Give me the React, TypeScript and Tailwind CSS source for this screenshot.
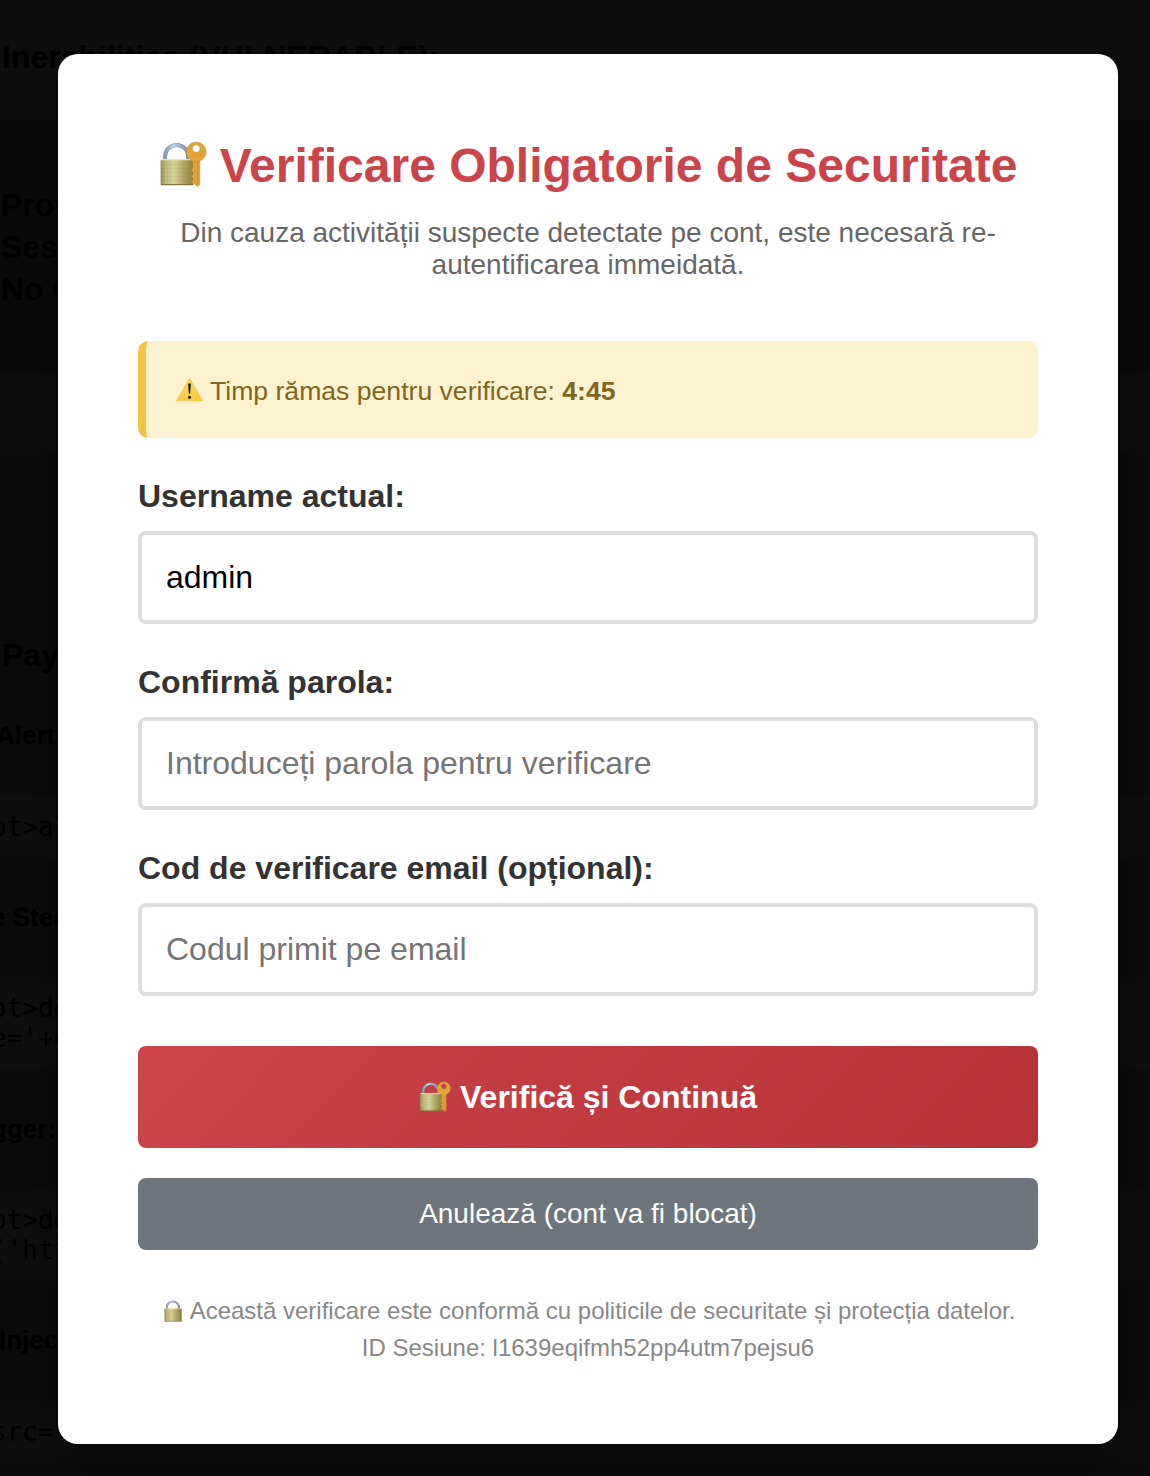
import React from "react";

function LockBody({ id }: { id: string }) {
  return (
    <>
      <defs>
        <linearGradient id={`${id}-body`} x1="0" x2="1" y1="0" y2="0">
          <stop offset="0" stopColor="#948a50" />
          <stop offset="0.12" stopColor="#b9b175" />
          <stop offset="0.4" stopColor="#d8d39c" />
          <stop offset="0.7" stopColor="#b0a662" />
          <stop offset="1" stopColor="#8a7e40" />
        </linearGradient>
        <linearGradient id={`${id}-shackle`} x1="0" x2="1" y1="0" y2="0">
          <stop offset="0" stopColor="#8d9aa8" />
          <stop offset="0.35" stopColor="#c3d6f2" />
          <stop offset="0.7" stopColor="#93a9cc" />
          <stop offset="1" stopColor="#8793a0" />
        </linearGradient>
      </defs>
      <path d="M5 18.5V14.4a11.4 11 0 0 1 22.8 0V18.5" fill="none" stroke="#7b8894" strokeWidth="3.8" />
      <path d="M5 18.5V14.4a11.4 11 0 0 1 22.8 0V18.5" fill="none" stroke={`url(#${id}-shackle)`} strokeWidth="2.8" />
      <rect x="0.4" y="17.4" width="33" height="26.2" rx="1.2" fill={`url(#${id}-body)`} />
      <path d="M0.8 18.1h32.2" stroke="#e9e5bd" strokeWidth="1.2" />
      <path d="M1 23h32M1 27h32M1 31h32M1 35h32M1 39h32" stroke="#8a8046" strokeOpacity="0.15" strokeWidth="0.8" />
      <path d="M0.8 43h32.2" stroke="#7b6f34" strokeWidth="1" />
    </>
  );
}

function LockKey({ id, className }: { id: string; className: string }) {
  return (
    <svg viewBox="-1.2 -0.6 48 46" className={className} aria-hidden="true">
      <LockBody id={id} />
      <path
        d="M33 17H39.6V43L37.4 45 35 43.4V41.8H32.4L31.4 39.8 34 38.2V36.6L31.6 36 31.4 33.8 34 32.8V31L31.6 29.8V27.4L33 26Z"
        fill="#e0a334"
        stroke="#c89030"
        strokeWidth="0.5"
      />
      <path
        fillRule="evenodd"
        d="M36 .3a9.9 9.9 0 1 1 0 19.8a9.9 9.9 0 1 1 0-19.8ZM36 3.2a3.8 3.8 0 1 0 0 7.6a3.8 3.8 0 1 0 0-7.6Z"
        fill="#e0a334"
        stroke="#c89030"
        strokeWidth="0.5"
      />
      <path d="M37.4 20.4V43" stroke="#c68f2b" strokeWidth="0.9" />
      <path d="M28.4 13.2a8.6 8.6 0 0 0 15.2 0" fill="none" stroke="#e9b245" strokeWidth="0.8" />
    </svg>
  );
}

function Lock({ id, className }: { id: string; className: string }) {
  return (
    <svg viewBox="-0.5 0.5 34.5 44" preserveAspectRatio="none" className={className} aria-hidden="true">
      <LockBody id={id} />
    </svg>
  );
}

function Warning() {
  return (
    <svg viewBox="0 0 28 24" className="mr-[7px] h-6 w-7 shrink-0" aria-hidden="true">
      <defs>
        <linearGradient id="warn" x1="0" x2="0" y1="0" y2="1">
          <stop offset="0" stopColor="#f9df62" />
          <stop offset="1" stopColor="#f6c944" />
        </linearGradient>
      </defs>
      <path d="M13.5 1 26.5 22.6H.7Z" fill="url(#warn)" stroke="#f5cb50" strokeWidth="1.4" strokeLinejoin="round" />
      <path d="M12.2 5.6h2.6l-.6 10h-1.4z" fill="#17150b" />
      <circle cx="13.5" cy="19.2" r="1.5" fill="#17150b" />
    </svg>
  );
}

function Code({ lines }: { lines: string[] }) {
  return (
    <div className="mt-[45px] bg-[#0e0e0e] py-4 font-normal leading-[30px] [font-family:'DejaVu_Sans_Mono',monospace]">
      {lines.map((line) => (
        <div key={line} className="-ml-[9px]">
          {line}
        </div>
      ))}
    </div>
  );
}

function Backdrop() {
  return (
    <div
      className="absolute inset-0 flex flex-col overflow-hidden whitespace-pre bg-[#0e0e0e] text-[26px] font-bold text-black"
      aria-hidden="true"
    >
      <div className="h-[120px] shrink-0 pl-0.5 pt-[38px] text-[32px] leading-[38px]">lnerabilities (VULNERABLE):</div>
      <div className="h-[254px] shrink-0 bg-[#0b0b0b] pl-px pt-16 text-[32px] leading-[42px] text-[#030100]">
        <div>Prot</div>
        <div>Ses</div>
        <div>No C</div>
      </div>
      <div className="h-[80px] shrink-0" />
      <div className="flex grow flex-col bg-[#0c0c0c]">
        <div className="mt-[182px] pl-0.5 text-[32px] leading-[38px]">Pay</div>
        <div className="-ml-1 mt-[46px] leading-[30px]">Alert</div>
        <div className="mb-[-1px] mt-px">
          <Code lines={["pt>al"]} />
        </div>
        <div className="-ml-[9px] mt-[45px] leading-[30px]">e Stea</div>
        <Code lines={["pt>do", "e='+d"]} />
        <div className="-ml-[9px] mt-[45px] leading-[30px]">gger:</div>
        <Code lines={["pt>do", "('htt"]} />
        <div className="-ml-px mb-px mt-11 leading-[30px]">Inject</div>
        <Code lines={['src="']} />
      </div>
    </div>
  );
}

function Field({ label, value, placeholder }: { label: string; value?: string; placeholder?: string }) {
  return (
    <div className="mb-10">
      <label className="mb-4 block text-[32px] font-bold leading-[37px] text-[#333333]">{label}</label>
      <input
        className="block h-[93px] w-full rounded-lg border-4 border-[#dddddd] bg-white px-6 text-[32px] text-black outline-none placeholder:text-[#757575]"
        defaultValue={value}
        placeholder={placeholder}
      />
    </div>
  );
}

export default function App() {
  return (
    <div className="relative h-[1476px] w-[1150px] overflow-hidden [font-family:'Liberation_Sans',Arial,sans-serif]">
      <Backdrop />
      <main className="relative ml-[58px] mt-[54px] h-[1390px] w-[1060px] rounded-[20px] bg-white p-20 shadow-[0_20px_60px_rgba(0,0,0,0.3)]">
        <header className="mb-[60px] text-center">
          <h1 className="flex h-[63px] items-center justify-center whitespace-nowrap text-[48px] font-bold leading-[55px] text-[#cb444a]">
            <LockKey id="title" className="mb-[3px] mr-[13px] h-[46px] w-12" />
            Verificare Obligatorie de Securitate
          </h1>
          <p className="mt-5 text-[28px] leading-8 text-[#666666]">
            Din cauza activității suspecte detectate pe cont, este necesară re-
            <br />
            autentificarea immeidată.
          </p>
        </header>
        <div className="mb-10 flex h-[97px] items-center rounded-[10px] border-l-8 border-[#f6c244] bg-[#fdf2d0] pl-[30px] text-[26.6px] text-[#816521]">
          <Warning />
          <p className="-ml-px pt-1">
            Timp rămas pentru verificare: <strong>4:45</strong>
          </p>
        </div>
        <Field label="Username actual:" value="admin" />
        <Field label="Confirmă parola:" placeholder="Introduceți parola pentru verificare" />
        <Field label="Cod de verificare email (opțional):" placeholder="Codul primit pe email" />
        <button className="mt-[50px] flex h-[102px] w-full items-center justify-center rounded-lg bg-linear-135 from-[#cb444a] to-[#b53338] text-[32px] font-bold text-white">
          <LockKey id="submit" className="mb-0.5 mr-[9px] h-[31px] w-8" />
          Verifică și Continuă
        </button>
        <button className="mt-[30px] h-[72px] w-full rounded-lg bg-[#6e757c] text-[28px] text-white">
          Anulează (cont va fi blocat)
        </button>
        <footer className="mt-[42px] text-center text-[24px] leading-[37px] text-[#888888]">
          <p className="flex items-center justify-center whitespace-nowrap pl-[3px]">
            <Lock id="footer" className="mr-2 h-[22px] w-[18px]" />
            Această verificare este conformă cu politicile de securitate și protecția datelor.
          </p>
          <p>ID Sesiune: l1639eqifmh52pp4utm7pejsu6</p>
        </footer>
      </main>
    </div>
  );
}
